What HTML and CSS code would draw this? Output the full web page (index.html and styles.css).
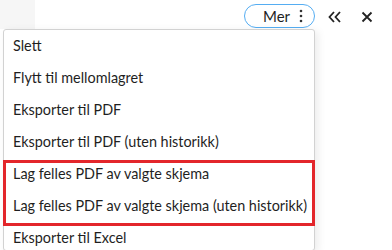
FILE: index.html
```html
<!DOCTYPE html>
<html>
<head>
    <title>Skjema</title>
    <link rel="stylesheet" href="styles.css">
</head>
<body>
    <div class="top-bar">
        <div class="side"></div>
        <div class="actions">
            <button class="more-btn">
                <span>Mer</span>
                <svg width="4" height="14" viewBox="0 0 4 14"><circle cx="2" cy="2" r="1.3"/><circle cx="2" cy="7" r="1.3"/><circle cx="2" cy="12" r="1.3"/></svg>
            </button>
            <button class="icon-btn collapse" title="Skjul">
                <svg width="14" height="12" viewBox="0 0 14 12"><path d="M6 1 L1.5 6 L6 11 M12 1 L7.5 6 L12 11" fill="none" stroke="#222" stroke-width="1.8"/></svg>
            </button>
            <button class="icon-btn close" title="Lukk">
                <svg width="12" height="12" viewBox="0 0 12 12"><path d="M1.5 1.5 L10.5 10.5 M10.5 1.5 L1.5 10.5" fill="none" stroke="#222" stroke-width="1.8"/></svg>
            </button>
        </div>
    </div>

    <div class="menu">
        <div class="menu-item">Slett</div>
        <div class="menu-item">Flytt til mellomlagret</div>
        <div class="menu-item">Eksporter til PDF</div>
        <div class="menu-item">Eksporter til PDF (uten historikk)</div>
        <div class="highlight">
            <div class="menu-item">Lag felles PDF av valgte skjema</div>
            <div class="menu-item">Lag felles PDF av valgte skjema (uten historikk)</div>
        </div>
        <div class="menu-item">Eksporter til Excel</div>
    </div>
</body>
</html>
```

FILE: styles.css
```css
body { font-family: Lato, "Liberation Sans", sans-serif; margin: 0; padding: 0; background: white; color: #1f1f1f; overflow: hidden; height: 250px; }
.top-bar { display: flex; height: 29px; }
.side { width: 35px; background: #f6f6f6; }
.actions { flex: 1; display: flex; align-items: center; justify-content: flex-end; padding-right: 16px; }
.more-btn {
    display: flex;
    align-items: center;
    gap: 9px;
    height: 24px;
    width: 71px;
    margin-top: 3px;
    padding: 0 0 0 18px;
    background: white;
    border: 1px solid #55adf2;
    border-radius: 12px;
    font-family: inherit;
    font-size: 15px;
    color: #1f1f1f;
}
.more-btn svg { fill: #333; }
.icon-btn {
    display: flex;
    align-items: center;
    justify-content: center;
    background: none;
    border: none;
    padding: 0;
    margin-top: 4px;
    width: 18px;
    height: 18px;
}
.icon-btn.collapse { margin-left: 11px; }
.icon-btn.close { margin-left: 14px; }
.menu {
    position: absolute;
    left: 3px;
    top: 29px;
    width: 310px;
    height: 220px;
    background: white;
    border: 1px solid #d2d2d2;
    border-radius: 3px;
    box-shadow: 3px 2px 8px rgba(0, 0, 0, 0.08);
}
.menu-item {
    height: 32px;
    line-height: 31px;
    padding-left: 9px;
    font-size: 14.4px;
    white-space: nowrap;
}
/* annotation frame drawn over the two items */
.highlight { position: relative; }
.highlight::after {
    content: "";
    position: absolute;
    left: -1px;
    right: -1px;
    top: 2px;
    bottom: -4px;
    border: 3px solid #e3262b;
}
```
